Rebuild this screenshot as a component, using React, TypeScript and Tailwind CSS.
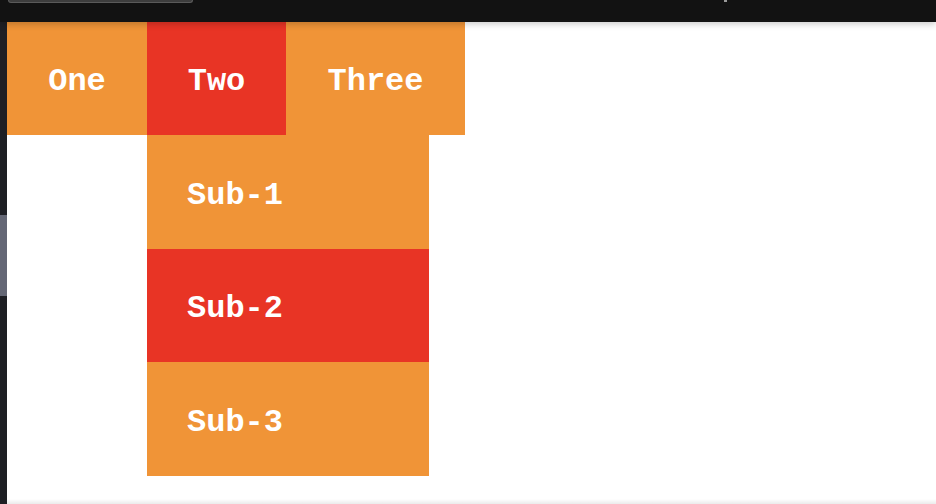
import React from "react";

const orange = "bg-[#f09437]";
const red = "bg-[#e83425]";

export default function App() {
  const mono = { fontFamily: '"Liberation Mono", "Courier New", monospace' };

  return (
    <div className="w-[936px] h-[504px] flex flex-col bg-white overflow-hidden">
      {/* browser chrome strip */}
      <div className="relative z-10 h-[22px] shrink-0 bg-[#121212] shadow-[0_2px_7px_rgba(0,0,0,0.22)]">
        <div className="ml-[8px] w-[185px] h-[3px] rounded-b-[4px] bg-[#3d3d3d] border-b border-x border-[#5a5a5a]" />
        <div className="absolute left-[724px] top-0 w-[3px] h-[2px] bg-[#9a9a9a]" />
      </div>

      <div className="flex flex-1 min-h-0">
        {/* left edge strip */}
        <div className="w-[7px] shrink-0 bg-[#1e1f24] flex flex-col">
          <div className="h-[193px]" />
          <div className="h-[81px] bg-[#646775]" />
        </div>

        <div className="flex-1 flex flex-col">
          <nav className="flex-1" style={mono}>
            <ul className="flex text-white font-bold text-[32px] leading-none">
              <li className={`w-[140px] h-[113px] pt-[7px] flex items-center justify-center ${orange}`}>One</li>
              <li className={`relative w-[139px] h-[113px] pt-[7px] flex items-center justify-center ${red}`}>
                Two
                <ul className="absolute left-0 top-full w-[282px] flex flex-col">
                  <li className={`h-[114px] pt-[7px] flex items-center pl-[40px] ${orange}`}>Sub-1</li>
                  <li className={`h-[113px] pt-[7px] flex items-center pl-[40px] ${red}`}>Sub-2</li>
                  <li className={`h-[114px] pt-[7px] flex items-center pl-[40px] ${orange}`}>Sub-3</li>
                </ul>
              </li>
              <li className={`w-[179px] h-[113px] pt-[7px] flex items-center justify-center ${orange}`}>Three</li>
            </ul>
          </nav>
          <div className="h-[5px] shrink-0 bg-gradient-to-b from-white to-[#ebebeb]" />
        </div>
      </div>
    </div>
  );
}
